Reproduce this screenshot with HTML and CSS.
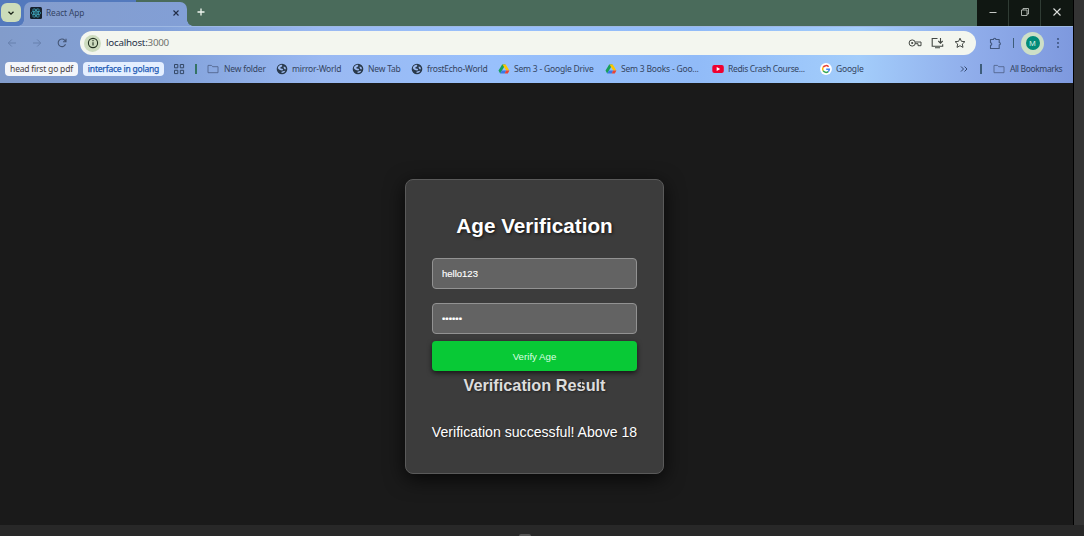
FILE: index.html
```html
<!DOCTYPE html>
<html lang="en">
<head>
<meta charset="utf-8">
<title>React App</title>
<link rel="stylesheet" href="styles.css">
</head>
<body>
<svg class="defs" aria-hidden="true">
  <symbol id="globe" viewBox="0 0 12 12"><circle cx="6" cy="6" r="5.300" fill="#29394b"/><path d="M1.800 5.200C2 3.200 3.800 1.800 5.800 1.800L6.400 3 5.200 4 4.200 4.400 4.600 5.500 6.500 5.700 7.200 6.700 6.300 7.500 4.700 7.200 3 6.400Z" fill="#9dbaf0"/><path d="M7.600 3.400 9.400 4 10 6.200 8.600 6.300 7.700 5ZM5.500 8.700 7.800 8 9.300 7.800C8.600 9.500 7.200 10.100 5.600 10Z" fill="#9dbaf0"/></symbol>
  <symbol id="folder" viewBox="0 0 12 12"><path d="M1 9.700V2.400h3.500l1.200 1.300H11v6Z" fill="none" stroke="#53678e" stroke-width=".9" stroke-linejoin="round"/></symbol>
  <symbol id="drive" viewBox="0 0 12 12"><path d="M4.200 1.500h3.300L3.600 8.200 2.200 10.500.5 7.500Z" fill="#18a05a"/><path d="M4.500 1.500h3.200l3.700 6H8.200Z" fill="#fdc600"/><path d="M2.200 10.500 3.900 7.500h4.300l-1.500 3Z" fill="#3978e8"/><path d="M8.100 7.500h3.300l-1.600 3H6.700Z" fill="#ea4335"/></symbol>
</svg>
<div class="desktop">
  <div class="browser">
    <div class="tabstrip">
      <div class="frame-blue"><div class="tabsearch"><svg width="8" height="8" viewBox="0 0 8 8"><path d="M1.500 2.700 4 5.200l2.500-2.500" fill="none" stroke="#172016" stroke-width="1.300"/></svg></div></div>
      <div class="tab">
        <svg class="react" width="12" height="12" viewBox="0 0 12 12"><rect width="12" height="12" rx="1.500" fill="#15202b"/><g fill="none" stroke="#42b6cc" stroke-width=".65"><ellipse cx="6" cy="6" rx="4.800" ry="1.900"/><ellipse cx="6" cy="6" rx="4.800" ry="1.900" transform="rotate(60 6 6)"/><ellipse cx="6" cy="6" rx="4.800" ry="1.900" transform="rotate(120 6 6)"/></g><circle cx="6" cy="6" r=".8" fill="#42b6cc"/></svg>
        <span class="tab-title">React App</span>
        <svg width="8" height="8" viewBox="0 0 8 8"><path d="M1.500 1.500l5 5m0-5-5 5" stroke="#202c46" stroke-width="1.100"/></svg>
      </div>
      <svg class="plus" width="8" height="8" viewBox="0 0 8 8"><path d="M4 .5v7M.5 4h7" stroke="#f0f6ef" stroke-width="1.300"/></svg>
      <div class="window-buttons">
        <div><svg width="10" height="10" viewBox="0 0 10 10"><path d="M1.500 5.500h7" stroke="#c5c9c5"/></svg></div>
        <div><svg width="10" height="10" viewBox="0 0 10 10"><path d="M1.500 3h5.500v5.500H1.500ZM3 3V1.500h5.500V7H7" fill="none" stroke="#b9beb9" stroke-width=".9" stroke-linejoin="round"/></svg></div>
        <div><svg width="10" height="10" viewBox="0 0 10 10"><path d="M1.500 1.500l7 7m0-7-7 7" stroke="#dde0dd" stroke-width="1.100"/></svg></div>
      </div>
    </div>
    <div class="toolbar">
      <svg class="nav" width="10" height="10" viewBox="0 0 10 10"><path d="M9 5H1.500M4.800 1.500 1.300 5l3.500 3.500" fill="none" stroke="#6780ad"/></svg>
      <svg class="nav" width="10" height="10" viewBox="0 0 10 10"><path d="M1 5h7.500M5.200 1.500 8.700 5 5.200 8.500" fill="none" stroke="#6780ad"/></svg>
      <svg class="nav" width="10" height="10" viewBox="0 0 10 10"><path d="M8.500 6.300A3.800 3.800 0 1 1 7.800 2.300L8.800 3.400M9 .8v3H6" fill="none" stroke="#435473" stroke-width="1.100"/></svg>
      <div class="address">
        <div class="info"><svg width="12" height="12" viewBox="0 0 12 12"><circle cx="6" cy="6" r="4.600" fill="none" stroke="#20301e" stroke-width="1.100"/><path d="M6 5.300v3.300M6 3.100v1.200" stroke="#20301e" stroke-width="1.100"/></svg></div>
        <span class="url">localhost:<span class="port">3000</span></span>
        <svg class="key" width="14" height="10" viewBox="0 0 14 10"><circle cx="4.200" cy="5" r="3.100" fill="none" stroke="#424742" stroke-width="1"/><circle cx="4.200" cy="5" r="1.100" fill="#424742"/><path d="M7.300 4h5.700v3.700H10V5.700H7.200" fill="none" stroke="#424742" stroke-width="1"/></svg>
        <svg class="install" width="13" height="12" viewBox="0 0 13 12"><path d="M6.500 1.500H1.200v7.700h10.500V7.300M4 10.700h5M9.500 1v5M7.300 4l2.200 2.200L11.700 4" fill="none" stroke="#424742" stroke-width="1.100"/></svg>
        <svg width="12" height="12" viewBox="0 0 12 12"><path d="M6 1.200 7.400 4.300l3.500.4-2.600 2.300.7 3.400-3-1.700-3 1.700.7-3.400L1.100 4.700l3.500-.4Z" fill="none" stroke="#424742" stroke-linejoin="round"/></svg>
      </div>
      <svg class="puzzle" width="13" height="13" viewBox="0 0 13 13"><path d="M1.500 2.500h3a1.200 1.200 0 0 1 2.400 0h3.300v3a1.200 1.200 0 0 1 0 2.400v3.600H1.500V8.300a1.300 1.300 0 0 0 0-2.600Z" fill="none" stroke="#41577e" stroke-width="1.100" stroke-linejoin="round"/></svg>
      <i class="rule toolbar-rule"></i>
      <div class="avatar"><span>M</span></div>
      <svg class="more" width="4" height="12" viewBox="0 0 4 12" fill="#344970"><circle cx="2" cy="2" r=".9"/><circle cx="2" cy="6" r=".9"/><circle cx="2" cy="10" r=".9"/></svg>
    </div>
    <div class="bookmarks">
      <span class="chip chip-head">head first go pdf</span>
      <span class="chip chip-go">interface in golang</span>
      <svg class="grid" width="12" height="12" viewBox="0 0 12 12"><path d="M1.500 1.500h3.300v3.300H1.500ZM7.300 1.500h3.300v3.300H7.300ZM1.500 7.300h3.300v3.300H1.500ZM7.300 7.300h3.300v3.300H7.300Z" fill="none" stroke="#344866"/></svg>
      <i class="rule green"></i>
      <div class="bm b1"><svg width="12" height="12"><use href="#folder"/></svg><span>New folder</span></div>
      <div class="bm b2"><svg width="12" height="12"><use href="#globe"/></svg><span>mirror-World</span></div>
      <div class="bm b3"><svg width="12" height="12"><use href="#globe"/></svg><span>New Tab</span></div>
      <div class="bm b4"><svg width="12" height="12"><use href="#globe"/></svg><span>frostEcho-World</span></div>
      <div class="bm b5"><svg width="12" height="12"><use href="#drive"/></svg><span>Sem 3 - Google Drive</span></div>
      <div class="bm b6"><svg width="12" height="12"><use href="#drive"/></svg><span>Sem 3 Books - Goo...</span></div>
      <div class="bm b7"><svg width="12" height="12" viewBox="0 0 12 12"><rect x=".3" y="2" width="11.500" height="8" rx="2" fill="#ef0030"/><path d="m4.700 4 3.500 2-3.500 2Z" fill="#fff"/></svg><span>Redis Crash Course...</span></div>
      <div class="bm b8"><svg width="12" height="12" viewBox="0 0 12 12"><circle cx="6" cy="6" r="5.900" fill="#fff"/><g fill="none" stroke-width="1.500"><path d="M8.600 3.800A3.400 3.400 0 0 0 3.100 4.300" stroke="#ea4335"/><path d="M3.100 4.300a3.400 3.400 0 0 0 0 3.400" stroke="#fbbc05"/><path d="M3.100 7.700A3.400 3.400 0 0 0 8.200 8.600" stroke="#34a853"/><path d="M8.200 8.600A3.400 3.400 0 0 0 9.400 6.200H6.200" stroke="#4285f4"/></g></svg><span>Google</span></div>
      <svg class="chevrons" width="8" height="8" viewBox="0 0 8 8"><path d="m1 1.500 2.500 2.500L1 6.500m3.500-5L7 4 4.500 6.500" fill="none" stroke="#344970"/></svg>
      <i class="rule all-rule"></i>
      <div class="bm all"><svg width="12" height="12"><use href="#folder"/></svg><span>All Bookmarks</span></div>
    </div>
    <main class="page">
      <form class="card">
        <h1>Age Verification</h1>
        <input type="text" value="hello123" aria-label="Username">
        <input type="password" value="secret" aria-label="Password">
        <button type="button">Verify Age</button>
        <h2>Verification Result</h2>
        <p>Verification successful! Above 18</p>
        <svg class="cursor" width="5" height="10" viewBox="0 0 5 10"><path d="M.5.500h4M2.500.500v9M.5 9.500h4" stroke="#242424" stroke-width=".8"/></svg>
      </form>
    </main>
  </div>
  <div class="below"><i></i></div>
</div>
</body>
</html>
```
FILE: styles.css
```css
* { box-sizing: border-box; }
body { margin: 0; background: #343434; overflow: hidden; }
svg { display: block; flex: none; }
.defs { display: none; }
.desktop { width: 1084px; height: 536px; }
.browser { width: 1074px; height: 525px; border-right: 1px solid #000; font-family: "Segoe UI", "Noto Sans", sans-serif; background: linear-gradient(90deg, #829ccb 0, #82a1d9 15%, #9ab9f2 30%, #98c0fc 46%, #91bbf8 65%, #a3cdfb 80%, #8facea 91%, #7e99de 100%) 0 0 / 100% 83px no-repeat; }
.tabstrip { height: 26px; display: flex; background: linear-gradient(90deg, #5379bd 136px, #4a6b5b 136px); }
.frame-blue { width: 24px; padding: 3px 0 0 1px; }
.tabsearch { width: 20px; height: 19px; border-radius: 6px; background: #ccdcba; display: flex; align-items: center; justify-content: center; }
.tab { width: 163px; height: 24px; margin-top: 2px; border-radius: 7px 7px 0 0; background: linear-gradient(90deg, #849dcd, #829fd6); display: flex; align-items: center; padding: 0 7px 3px 6px; position: relative; }
.tab::before, .tab::after { content: ""; position: absolute; bottom: 0; width: 6px; height: 6px; }
.tab::before { left: -6px; background: radial-gradient(circle at 0 0, transparent 5.500px, #849dcd 6px); }
.tab::after { right: -6px; background: radial-gradient(circle at 100% 0, transparent 5.500px, #829fd6 6px); }
.tab-title { flex: 1; margin-left: 4px; font-size: 8.300px; line-height: 12px; letter-spacing: -.1px; color: #344465; }
.plus { margin: 8px 0 0 10px; }
.window-buttons { margin-left: auto; display: flex; background: #101712; }
.window-buttons div { width: 32px; height: 26px; display: flex; align-items: center; justify-content: center; padding-bottom: 2px; border-right: 1px solid #303c34; }
.window-buttons div:last-child { border: 0; }
.toolbar { height: 29px; display: flex; align-items: center; padding: 4px 0 0 7px; border-top: 1px solid #9db8e3; }
.nav { margin-right: 15px; }
.address { width: 896px; height: 24px; margin-left: -2px; border-radius: 12px; background: #f3f6ef; display: flex; align-items: center; padding: 0 10px 0 4px; }
.info { width: 17px; height: 17px; border-radius: 50%; background: #cddcbf; display: flex; align-items: center; justify-content: center; }
.url { margin-left: 5px; margin-right: auto; font-size: 9.800px; line-height: 14px; letter-spacing: -.25px; color: #263148; }
.port { color: #70736e; }
.key { margin-right: 9px; }
.install { margin-right: 10px; }
.puzzle { margin-left: 13px; }
.rule { width: 1px; height: 10px; background: #3e5d7a; flex: none; }
.toolbar-rule { margin-left: 11px; }
.avatar { margin-left: 7px; width: 23px; height: 23px; border-radius: 50%; background: #cddfc7; display: flex; align-items: center; justify-content: center; flex: none; }
.avatar span { width: 14px; height: 14px; border-radius: 50%; background: #008b79; color: #d9efe7; font-size: 7.500px; line-height: 14px; text-align: center; }
.more { margin-left: 12px; }
.bookmarks { height: 28px; display: flex; align-items: center; padding-left: 5px; font-size: 8.500px; line-height: 12px; letter-spacing: -.2px; color: #344460; }
.chip { flex: none; height: 14px; line-height: 14px; border-radius: 4px; background: #f4f6fa; text-align: center; white-space: nowrap; }
.chip-head { width: 73px; letter-spacing: -.2px; color: #473e43; }
.chip-go { width: 81px; margin-left: 5px; letter-spacing: -.2px; background: #e4efff; color: #215ab5; -webkit-text-stroke: .25px; }
.grid { margin-left: 9px; }
.green { margin: 0 10px 0 10px; width: 2px; background: #347363; }
.bm { display: flex; align-items: center; flex: none; white-space: nowrap; }
.bm span { margin-left: 4px; }
.b1 { width: 69px; }
.b1 span { margin-left: 5px; }
.b2 { width: 76px; letter-spacing: -.25px; }
.b3 { width: 59px; }
.b4 { width: 87px; letter-spacing: -.25px; }
.b5 { width: 107px; }
.b6 { width: 107px; }
.b7 { width: 108px; letter-spacing: -.34px; }
.b8 { width: 140px; }
.all-rule { margin-left: 12px; width: 2px; }
.all { margin-left: 11px; letter-spacing: -.38px; }
.all span { margin-left: 5px; }
.page { height: 442px; background: #1a1a1a; padding: 96px 0 0 405px; font-family: "Liberation Sans", Arial, sans-serif; }
.card { position: relative; width: 259px; height: 295px; padding: 34px 26px 0; border: 1px solid #5a5a5a; border-radius: 8px; background: #3c3c3c; box-shadow: 0 5px 20px rgba(0,0,0,.75); color: #fff; text-align: center; display: flex; flex-direction: column; }
h1 { margin: 0 0 19px; font-size: 20.700px; line-height: 24px; padding-bottom: 1px; text-shadow: 1px 1px 3px #111; white-space: nowrap; }
input { width: 205px; height: 31px; margin: 0 0 14px; padding: 0 9px 1px; border: 1px solid #929292; border-radius: 4px; background: #636363; color: #fff; font: 9.500px "Liberation Sans", Arial, sans-serif; -webkit-text-stroke: .15px; outline: 0; }
input[type="password"] { margin-bottom: 7px; }
button { width: 205px; height: 30px; padding: 0; border: 0; border-radius: 4px; background: #08c936; box-shadow: 0 2px 5px rgba(0,0,0,.65); color: #dcffe2; font: 9.700px "Liberation Sans", Arial, sans-serif; }
h2 { margin: 4px 0 27px; font-size: 16.300px; line-height: 20px; color: #ddd; text-shadow: 1px 1px 2px #222; white-space: nowrap; }
p { margin: 0 -2px; font-size: 14.100px; line-height: 20px; text-shadow: 1px 1px 2px #222; white-space: nowrap; }
.cursor { position: absolute; left: 173px; top: 199px; }
.below { width: 1084px; height: 11px; background: #282828; display: flex; justify-content: center; align-items: flex-end; padding-right: 34px; overflow: hidden; }
.below i { width: 12px; height: 2px; border-radius: 10px 10px 0 0; background: #555; }
```
